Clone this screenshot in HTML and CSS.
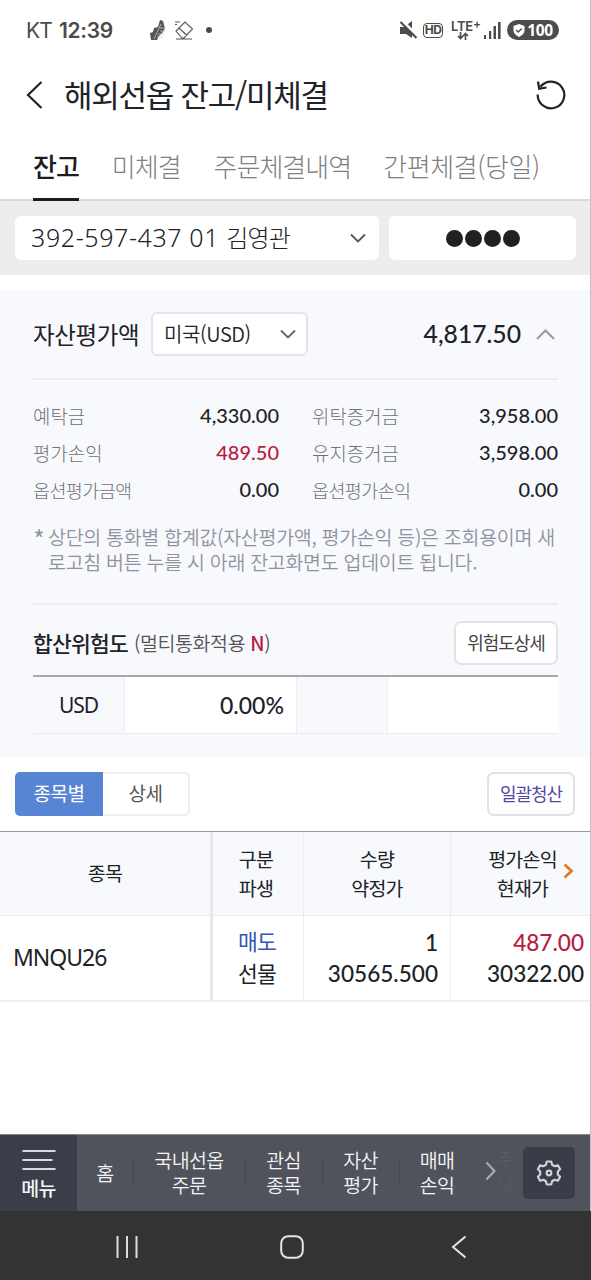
FILE: index.html
```html
<!DOCTYPE html>
<html lang="ko">
<head>
<meta charset="utf-8">
<title>해외선옵 잔고/미체결</title>
<link rel="stylesheet" href="styles.css">
</head>
<body>
<div class="phone">
  <div class="status">
    <span class="carrier">KT</span><span class="clock">12:39</span>
    <svg class="st-shoe" width="18" height="22" viewBox="0 0 18 22"><path d="M11 1l3 1 1 4 1 3-2 4-4 4-2 4H2L1 14l3-1 1-4 4-1z" fill="#555"/><path d="M5 20L12 5M11 12h5M9 15h6M11 9h5M8 18h6" stroke="#ccc" stroke-width=".8"/></svg>
    <svg class="st-erase" width="20" height="20" viewBox="0 0 20 20" fill="none" stroke="#555" stroke-width="1.1"><path d="M2 11L11 2l7.500 7L10 18H8zM5 8l8 7.500M2 19h16M1 2h5M1 4.500h2"/></svg>
    <i class="st-dot"></i>
    <div class="st-right">
      <svg width="19" height="20" viewBox="0 0 19 20"><path d="M1 7h4l8-6v17l-6-4H1z" fill="#4c4c4c"/><path d="M2.500 0l17 17" stroke="#fff" stroke-width="3"/><path d="M1.500 2l16 16" stroke="#4c4c4c" stroke-width="2.200"/></svg>
      <span class="hd">HD</span>
      <span class="lte"><b>LTE<sup>+</sup></b><svg width="12" height="8" viewBox="0 0 12 8" fill="none" stroke="#4c4c4c" stroke-width="1.700"><path d="M3.500 0v6M1 4l2.500 2.500L6 4M8.500 8V1.500M6 4l2.500-2.500L11 4"/></svg></span>
      <svg class="bars" width="17" height="18" viewBox="0 0 17 18" fill="#4c4c4c"><path d="M0 14h2v4H0zM5 10h2.200v8H5zM9.500 5h2.500v13H9.500zM14 1h2.600v17H14z"/></svg>
      <span class="batt"><svg width="12" height="13" viewBox="0 0 12 13"><path d="M6 0l5.500 2v4.500c0 3-2.500 5-5.500 6.500C3 11.500.5 9.500.5 6.500V2z" fill="#fff"/><path d="M3.300 6l2 2 3.500-3.500" fill="none" stroke="#4c4c4c" stroke-width="1.400"/></svg>100</span>
    </div>
  </div>

  <div class="titlebar">
    <svg width="18" height="30" viewBox="0 0 18 30" fill="none" stroke="#222" stroke-width="2.200"><path d="M15.500 2L2 15l13.500 13"/></svg>
    <h1>해외선옵 잔고/미체결</h1>
    <svg class="reload" width="32" height="32" viewBox="0 0 32 32" fill="none" stroke="#222" stroke-width="2.200"><path d="M2.700 15.500a13.300 13.300 0 1 0 2.800-7.700M3 2.500l1.200 7.300 7.300-1.300"/></svg>
  </div>

  <nav class="tabs">
    <span class="tab on">잔고</span><span class="tab">미체결</span><span class="tab">주문체결내역</span><span class="tab wide">간편체결(당일)</span>
  </nav>

  <div class="account">
    <div class="field acct"><span>392-597-437 01 <em>김영관</em></span><svg width="16" height="10" viewBox="0 0 16 10" fill="none" stroke="#555" stroke-width="1.800"><path d="M1 1.500L8 8.500l7-7"/></svg></div>
    <div class="field pw"><i></i><i></i><i></i><i></i></div>
  </div>

  <section class="panel">
    <div class="asset">
      <strong>자산평가액</strong>
      <div class="select"><span>미국(USD)</span><svg width="16" height="10" viewBox="0 0 16 10" fill="none" stroke="#666" stroke-width="1.800"><path d="M1 1.500L8 8.500l7-7"/></svg></div>
      <span class="total">4,817.50</span>
      <svg class="fold" width="19" height="11" viewBox="0 0 19 11" fill="none" stroke="#999" stroke-width="2"><path d="M1 10l8.500-8.500L18 10"/></svg>
    </div>
    <div class="figures">
      <span class="k">예탁금</span><span class="v">4,330.00</span><span class="k r">위탁증거금</span><span class="v">3,958.00</span>
      <span class="k">평가손익</span><span class="v red">489.50</span><span class="k r">유지증거금</span><span class="v">3,598.00</span>
      <span class="k tight">옵션평가금액</span><span class="v">0.00</span><span class="k r tight">옵션평가손익</span><span class="v">0.00</span>
    </div>
    <div class="note"><span class="star">*</span><p>상단의 통화별 합계값(자산평가액, 평가손익 등)은 조회용이며 새<br>로고침 버튼 누를 시 아래 잔고화면도 업데이트 됩니다.</p></div>
    <div class="risk">
      <strong>합산위험도</strong><span class="multi">(멀티통화적용 <b>N</b>)</span>
      <button class="btn detail">위험도상세</button>
    </div>
    <div class="risk-table"><span class="cur">USD</span><span class="pct">0.00%</span><span></span><span class="w"></span></div>
  </section>

  <div class="tools">
    <div class="seg"><span class="seg-on">종목별</span><span class="seg-off">상세</span></div>
    <button class="btn clear">일괄청산</button>
  </div>

  <div class="grid">
    <div class="th first">종목</div>
    <div class="th kind">구분<br>파생</div>
    <div class="th">수량<br>약정가</div>
    <div class="th last"><span>평가손익<br>현재가</span><svg width="11" height="16" viewBox="0 0 11 16" fill="none" stroke="#e27a22" stroke-width="2.800"><path d="M1.500 1.500L8.500 8l-7 6.500"/></svg></div>
    <div class="td first">MNQU26</div>
    <div class="td mid"><span class="blue">매도</span><span>선물</span></div>
    <div class="td num"><span>1</span><span>30565.500</span></div>
    <div class="td num last"><span class="red">487.00</span><span>30322.00</span></div>
  </div>

  <div class="dock">
    <div class="menu"><svg width="34" height="22" viewBox="0 0 34 22" fill="none" stroke="#d8dae0" stroke-width="2"><path d="M.5 2h33M.5 11h30M.5 20h33"/></svg><span>메뉴</span></div>
    <div class="quick">
      <span class="q1">홈</span><span class="q2">국내선옵<br>주문</span><span class="q3">관심<br>종목</span><span class="q4">자산<br>평가</span><span class="q5">매매<br>손익</span>
    </div>
    <div class="more"><svg width="11" height="20" viewBox="0 0 11 20" fill="none" stroke="#a9adb5" stroke-width="2"><path d="M1.500 1.500L9.500 10l-8 8.500"/></svg><span>주<br>니</span></div>
    <div class="gear"><svg width="26" height="26" viewBox="0 0 26 26" fill="none" stroke="#d0d3d9" stroke-width="2.200" stroke-linejoin="round"><path d="M10.800 1.500h4.400l.9 3.200 2.600 1.500 3.200-.9 2.200 3.900-2.300 2.300v3l2.300 2.300-2.200 3.900-3.200-.9-2.600 1.500-.9 3.200h-4.400l-.9-3.200-2.600-1.500-3.200.9-2.200-3.900 2.300-2.300v-3L1.900 9.200l2.200-3.900 3.200.9 2.600-1.500z"/><circle cx="13" cy="13" r="2.300"/></svg></div>
  </div>

  <div class="sysnav">
    <svg width="22" height="24" viewBox="0 0 22 24" stroke="#ddd" stroke-width="2"><path d="M1.500 1v22M11 1v22M20.500 1v22"/></svg>
    <svg class="home" width="24" height="24" viewBox="0 0 24 24" fill="none" stroke="#e4e4e4" stroke-width="2"><rect x="1.200" y="1.200" width="21.600" height="21.600" rx="7"/></svg>
    <svg width="16" height="24" viewBox="0 0 16 24" fill="none" stroke="#e4e4e4" stroke-width="2"><path d="M14.500 1.500L2 12l12.500 10.500"/></svg>
  </div>
  <i class="edge"></i>
</div>
</body>
</html>
```
FILE: styles.css
```css
* { box-sizing: border-box; margin: 0; padding: 0; }
body { width: 591px; height: 1280px; overflow: hidden; background: #fff; color: #202226; font-family: "Noto Sans CJK KR", sans-serif; }
svg { display: block; flex: none; }
i, em { font-style: normal; }
.phone { position: relative; width: 591px; height: 1280px; display: flex; flex-direction: column; }
.phone > * { flex: none; }
.edge { position: absolute; right: 0; top: 0; width: 1px; height: 1211px; background: #c3c4c7; }
.red { color: #b91c40; }
.blue { color: #3157b5; }

.status { height: 60px; display: flex; align-items: center; padding-left: 26px; color: #4a4a4a; font-family: Inter, sans-serif; }
.carrier { font-size: 21px; font-weight: 400; width: 33px; letter-spacing: -.8px; }
.clock { font-size: 21px; font-weight: 600; width: 90px; letter-spacing: -.3px; }
.st-erase { margin-left: 7px; }
.st-dot { width: 6px; height: 6px; border-radius: 50%; background: #4a4a4a; margin-left: 12px; }
.st-right { margin-left: auto; margin-right: 32px; display: flex; align-items: center; }
.hd { margin-left: 5px; border: 1.5px solid #4c4c4c; border-radius: 4px; height: 15px; width: 20px; font: 700 12px/12px Inter, sans-serif; letter-spacing: -.6px; text-align: center; }
.lte { margin-left: 8px; width: 29px; display: flex; flex-direction: column; align-items: center; font-size: 13px; line-height: 11px; letter-spacing: -.2px; }
.lte b { font-weight: 600; white-space: nowrap; align-self: flex-start; }
.lte sup { font-size: 12px; line-height: 0; vertical-align: 3px; }
.lte svg { margin-right: 6px; }
.bars { margin-left: 4px; }
.batt { margin-left: 6px; width: 52px; height: 20px; border-radius: 10px; background: #4c4c4c; color: #fff; display: flex; align-items: center; justify-content: center; gap: 2px; font: 700 15.500px/20px "Noto Sans", sans-serif; letter-spacing: -.3px; }

.titlebar { height: 70px; display: flex; align-items: center; padding: 0 24px 0 26px; }
h1 { font-size: 31px; font-weight: 400; letter-spacing: -1.25px; margin-left: 20px; line-height: 40px; padding-bottom: 3px; }
.reload { margin-left: auto; }

.tabs { height: 71px; display: flex; gap: 33px; padding-left: 33px; border-bottom: 2px solid #d9d9d9; }
.tab { height: 71px; font-size: 26px; font-weight: 300; letter-spacing: -1px; line-height: 71px; color: #808080; white-space: nowrap; }
.tab.wide { letter-spacing: -.4px; margin-left: -1px; }
.tab.on { font-weight: 500; color: #1d1d1f; border-bottom: 3px solid #1d1d1f; }

.account { height: 74px; background: #ededed; display: flex; gap: 10px; padding: 15px 15px 0; }
.field { height: 44px; border-radius: 6px; background: #fff; display: flex; align-items: center; }
.acct { width: 364px; justify-content: space-between; padding: 0 13px 0 16px; font-family: "Noto Sans", "Noto Sans CJK KR", sans-serif; font-size: 25px; font-weight: 300; letter-spacing: .6px; }
.acct span { padding-bottom: 4px; }
.acct em { font-size: 24px; letter-spacing: -.8px; }
.pw { width: 187px; justify-content: center; gap: 2px; }
.pw i { width: 17px; height: 17px; border-radius: 50%; background: #202020; }

.panel { margin-top: 15px; height: 467px; background: #f8f9fd; padding: 0 33px; }
.asset { height: 90px; border-bottom: 2px solid #ecedf1; display: flex; align-items: center; }
.asset strong { font-size: 23.500px; font-weight: 400; letter-spacing: -.4px; width: 118px; white-space: nowrap; }
.select { width: 157px; height: 44px; border: 2px solid #e3e4e8; border-radius: 6px; background: #fff; display: flex; align-items: center; justify-content: space-between; padding: 0 10px 0 11px; font-size: 20px; font-weight: 350; letter-spacing: -.4px; }
.select span { padding-bottom: 2px; }
.total { margin-left: auto; margin-right: 15px; font: 500 24.700px/30px Lato, sans-serif; }
.fold { margin-right: 3px; }
.figures { display: grid; grid-template-columns: 123px 123px 150px 129px; grid-auto-rows: 37px; padding-top: 17px; align-items: center; }
.k { font-size: 18.800px; font-weight: 300; letter-spacing: .1px; color: #6f7278; white-space: nowrap; }
.tight { font-size: 18.500px; letter-spacing: -.6px; }
.r { padding-left: 33px; }
.v { text-align: right; font: 500 20px/37px Lato, sans-serif; }
.note { height: 97px; border-bottom: 2px solid #ecedf1; padding-top: 16px; display: flex; color: #8f939f; font-size: 19.500px; line-height: 25px; font-weight: 350; }
.star { width: 15px; font-size: 26px; line-height: 30px; }
.note p { white-space: nowrap; letter-spacing: -.3px; }
.risk { height: 70px; display: flex; align-items: center; padding-top: 5px; }
.risk strong { font-size: 21.500px; font-weight: 500; letter-spacing: -.8px; }
.multi { margin-left: 6px; font-size: 19.500px; font-weight: 350; letter-spacing: -.4px; color: #555; }
.multi b { color: #b91c40; font-weight: 500; }
.btn { border: 2px solid #e2e3e7; border-radius: 7px; background: #fff; height: 44px; font-family: inherit; text-align: center; white-space: nowrap; padding-bottom: 2px; }
.detail { margin-left: auto; width: 104px; font-size: 18px; letter-spacing: -1.1px; color: #444; }
.risk-table { height: 59px; border-top: 2px solid #a6a8ad; border-bottom: 1px solid #e9eaee; display: grid; grid-template-columns: 92px 172px 91px 170px; line-height: 56px; }
.risk-table span { border-right: 1px solid #ecedf1; }
.risk-table .w { background: #fff; border: 0; }
.risk-table .cur { text-align: center; font: 400 21px/56px "Noto Sans", sans-serif; letter-spacing: -1px; }
.risk-table .pct { background: #fff; text-align: right; padding-right: 12px; font: 500 23px/56px Lato, sans-serif; }

.tools { height: 74px; display: flex; justify-content: space-between; padding: 15px 16px 0 15px; }
.seg { display: flex; height: 44px; font-size: 19px; letter-spacing: -.4px; line-height: 42px; text-align: center; }
.seg-on { width: 88px; background: #5884d4; color: #fff; border-radius: 5px 0 0 5px; }
.seg-off { width: 87px; border: 2px solid #efeff1; border-left: 0; border-radius: 0 5px 5px 0; line-height: 38px; color: #555; }
.clear { width: 88px; font-size: 18px; letter-spacing: -1px; color: #5548a5; padding-bottom: 3px; }

.grid { border-top: 1px solid #999; display: grid; grid-template-columns: 213px 91px 147px 140px; grid-template-rows: 84px 86px; }
.th { background: #f8f9fd; border-right: 1px solid #ecedf1; border-bottom: 1px solid #ecedf1; display: flex; align-items: center; justify-content: center; text-align: center; font-size: 19.500px; line-height: 29.500px; letter-spacing: -.8px; padding-bottom: 1px; }
.td { border-right: 1px solid #ecedf1; border-bottom: 2px solid #f0f0f2; display: flex; flex-direction: column; justify-content: center; font-size: 21.500px; line-height: 32px; letter-spacing: -.8px; }
.first { border-right: 3px solid #e7e8ec; }
.last { border-right: 0; }
.kind { padding-right: 4px; }
.th.last { padding-left: 20px; gap: 6px; }
.th.last svg { margin-top: -4px; }
.td.first { padding: 0 0 2px 13px; font: 400 23px/32px "Noto Sans", sans-serif; letter-spacing: -1px; }
.mid { align-items: center; padding: 0 2px 3px 0; }
.num { align-items: flex-end; padding-right: 12px; font: 500 22.600px/31px Lato, sans-serif; letter-spacing: 0; }
.num.last { padding-right: 7px; }

.dock { margin-top: auto; height: 77px; background: #50535b; border-top: 1px solid #85878c; display: flex; color: #f4f4f6; font-size: 19.500px; font-weight: 350; letter-spacing: -.6px; line-height: 25px; text-align: center; }
.menu { width: 77px; background: #3a3e48; display: flex; flex-direction: column; align-items: center; padding-top: 14px; gap: 4px; font-weight: 500; }
.quick { display: flex; align-items: center; width: 399px; padding-bottom: 2px; }
.q1 { width: 56px; }
.q2 { width: 112px; }
.q3, .q4 { width: 77px; }
.q5 { width: 76px; }
.q2, .q3, .q4, .q5 { background: linear-gradient(#454850, #454850) left center / 1px 30px no-repeat; }
.more { width: 47px; display: flex; align-items: center; gap: 2px; padding: 0 0 4px 9px; }
.more span { color: #595c64; font-size: 16px; }
.gear { width: 52px; height: 52px; margin-top: 12px; border-radius: 5px; background: #393d47; display: flex; align-items: center; justify-content: center; }
.sysnav { height: 69px; background: #333; display: flex; align-items: center; padding: 2px 124px 0 116px; justify-content: space-between; }
.home { margin-right: 5px; }
```
